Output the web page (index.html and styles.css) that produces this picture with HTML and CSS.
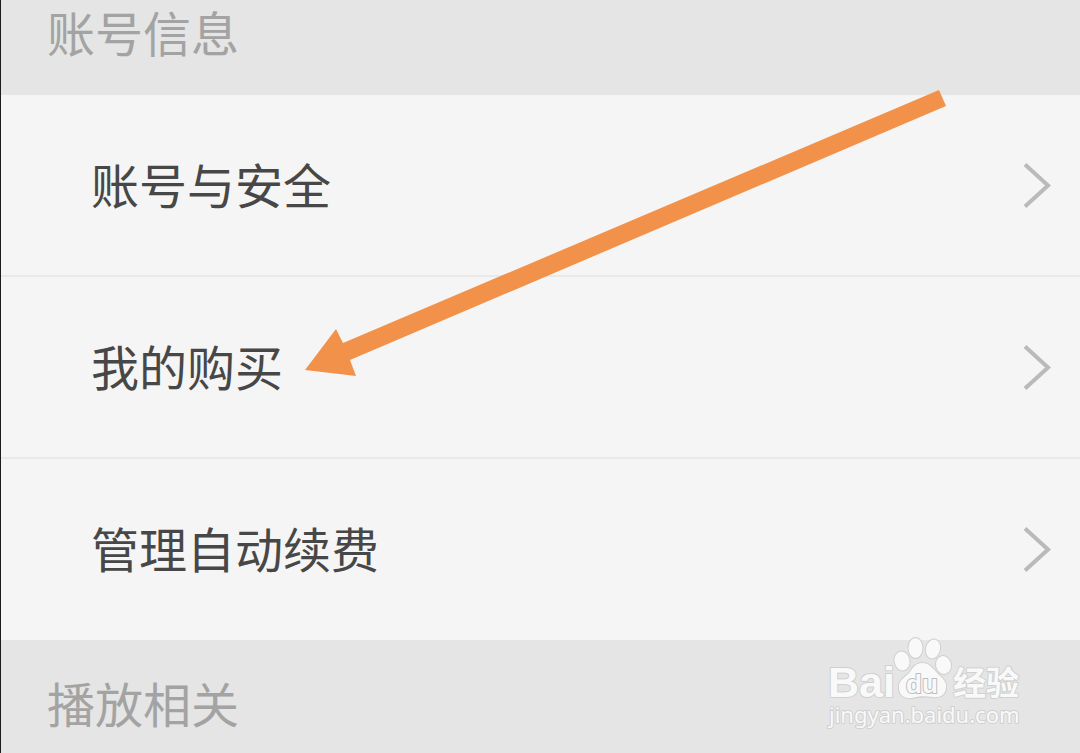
FILE: index.html
```html
<!DOCTYPE html>
<html lang="zh-CN">
<head>
<meta charset="utf-8">
<meta name="viewport" content="width=device-width, initial-scale=1">
<title>账号信息</title>
<link rel="stylesheet" href="styles.css">
</head>
<body>
<main class="settings">
  <h2 class="section-title section-title-first">账号信息</h2>
  <ul class="list">
    <li class="item"><a class="link" href="#security">账号与安全
      <svg class="chevron" viewBox="0 0 30 52" aria-hidden="true"><path d="M3 7.500L26 28.500L3 49.500"/></svg></a></li>
    <li class="item"><a class="link" href="#purchases">我的购买
      <svg class="chevron" viewBox="0 0 30 52" aria-hidden="true"><path d="M3 7.500L26 28.500L3 49.500"/></svg></a></li>
    <li class="item"><a class="link" href="#renewal">管理自动续费
      <svg class="chevron" viewBox="0 0 30 52" aria-hidden="true"><path d="M3 7.500L26 28.500L3 49.500"/></svg></a></li>
  </ul>
  <h2 class="section-title section-title-last">播放相关</h2>
  <svg class="pointer" viewBox="0 0 642 288" aria-hidden="true">
    <path d="M1 281L32 240L39 254L635 1L642 17L46 271L52 287Z"/>
  </svg>
  <svg class="watermark" viewBox="0 0 230 128" role="img" aria-label="Baidu 经验">
    <text class="mark-latin" x="18" y="72">Bai</text>
    <g class="mark-paw">
      <ellipse cx="92" cy="36" rx="7.500" ry="9.500" transform="rotate(-12 92 36)"/>
      <ellipse cx="105.500" cy="23" rx="7" ry="10"/>
      <ellipse cx="123" cy="24" rx="7" ry="9.500" transform="rotate(14 123 24)"/>
      <ellipse cx="133.500" cy="40" rx="7.500" ry="9" transform="rotate(-12 133.500 40)"/>
      <path d="M112 38C119 38 123 43 127 48C132 53 137 56 136 63C135 71 129 73 122 72C115 71 109 71 102 73C94 74 89 70 89 63C88 55 96 52 100 47C103 42 106 38 112 38Z"/>
    </g>
    <text class="mark-du" x="96" y="68">du</text>
    <text class="mark-han" x="143" y="70">经验</text>
    <text class="mark-url" x="19" y="98">jingyan.baidu.com</text>
  </svg>
</main>
</body>
</html>
```
FILE: styles.css
```css
* {
  box-sizing: border-box;
}

body {
  margin: 0;
  background: #e5e5e5;
  font-family: "Noto Sans CJK SC", sans-serif;
}

.settings {
  position: relative;
  min-height: 100vh;
  overflow: hidden;
  border-left: 1px solid #1c1c1c;
}

.section-title {
  margin: 0;
  padding: 0 46px;
  color: #a3a3a3;
  font-size: 48px;
  font-weight: 400;
  line-height: 62px;
}

.section-title-first {
  padding-bottom: 33px;
}

.section-title-last {
  padding-top: 31px;
  padding-bottom: 20px;
}

.list {
  margin: 0;
  padding: 0 0 1px;
  list-style: none;
  background: #f5f5f5;
}

.item + .item {
  border-top: 2px solid #e9e9e9;
}

.link {
  display: flex;
  align-items: center;
  justify-content: space-between;
  padding: 52px 28px 56px 90px;
  color: #474747;
  font-size: 48px;
  line-height: 72px;
  text-decoration: none;
}

.chevron {
  width: 30px;
  height: 52px;
  fill: none;
  stroke: #bababa;
  stroke-width: 4;
}

.pointer {
  position: absolute;
  top: 89px;
  left: 303px;
  width: 642px;
  height: 288px;
  fill: #f2924a;
}

.watermark {
  position: absolute;
  right: 40px;
  top: 625px;
  width: 230px;
  height: 128px;
  fill: #f9f9f9;
  stroke: #d0d0d0;
  stroke-width: 2;
  stroke-linejoin: round;
  paint-order: stroke;
}

.mark-latin {
  font: 700 43px "Liberation Sans", sans-serif;
}

.mark-du {
  font: 700 26px "Liberation Sans", sans-serif;
  stroke: #bdbdbd;
}

.mark-han {
  font: 700 33px "Noto Sans CJK SC", sans-serif;
}

.mark-url {
  font: 400 22px "Noto Sans", sans-serif;
}
```
